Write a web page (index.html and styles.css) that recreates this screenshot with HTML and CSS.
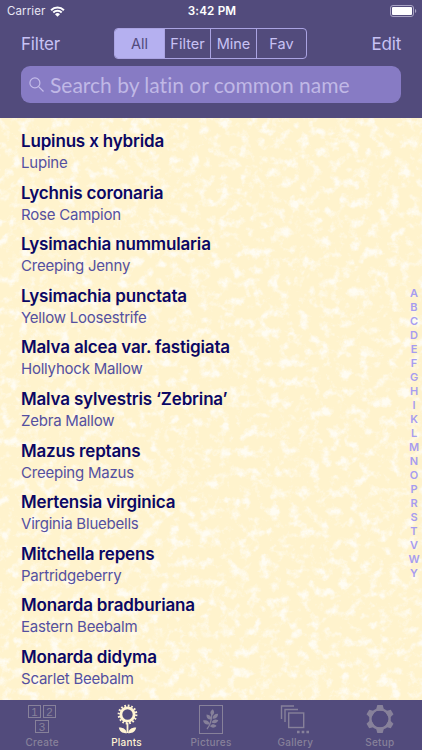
FILE: index.html
```html
<!DOCTYPE html>
<html lang="en">
<head>
  <meta charset="UTF-8">
  <meta name="viewport" content="width=device-width, initial-scale=1.0">
  <title>Plants</title>
  <link rel="stylesheet" href="styles.css">
</head>
<body>
  <header class="header">
    <div class="status-bar">
      <div class="carrier">
        <span>Carrier</span>
        <svg class="wifi" viewBox="0 0 16 12" width="15" height="11">
          <path d="M1 4.600a10 10 0 0 1 14 0M3.400 7a6.600 6.600 0 0 1 9.200 0" fill="none" stroke="#fff" stroke-width="2.200"/>
          <path d="M8 11.600L5.300 8.900a3.800 3.800 0 0 1 5.400 0z" fill="#fff"/>
        </svg>
      </div>
      <span class="time">3:42 PM</span>
      <svg class="battery" viewBox="0 0 27 12" width="27" height="12">
        <rect x=".5" y=".5" width="23" height="11" rx="2.500" fill="none" stroke="#a9a4c4"/>
        <rect x="2" y="2" width="20" height="8" rx="1" fill="#fff"/>
        <path d="M25 4a2.200 2.200 0 0 1 0 4z" fill="#a9a4c4"/>
      </svg>
    </div>
    <div class="nav-bar">
      <a class="nav-link nav-filter">Filter</a>
      <div class="segments">
        <span class="segment active">All</span>
        <span class="segment">Filter</span>
        <span class="segment">Mine</span>
        <span class="segment">Fav</span>
      </div>
      <a class="nav-link nav-edit">Edit</a>
    </div>
    <div class="search">
      <svg viewBox="0 0 15 15" width="15" height="15" fill="none" stroke="#c4bce9" stroke-width="1.200">
        <circle cx="5.900" cy="5.900" r="5"/>
        <path d="M9.600 9.600l4.900 4.900"/>
      </svg>
      <span class="placeholder">Search by latin or common name</span>
    </div>
  </header>

  <main class="content">
    <svg class="paper" width="422" height="582">
      <filter id="marble" x="0" y="0" width="100%" height="100%" color-interpolation-filters="sRGB">
        <feTurbulence type="fractalNoise" baseFrequency="0.1" numOctaves="5" seed="12"/>
        <feColorMatrix values="0 0 0 0 1  0 0 0 0 1  0 0 0 0 1  3 0 1.5 0 -2.2"/>
      </filter>
      <rect width="422" height="582" filter="url(#marble)"/>
    </svg>
    <ul class="plants">
      <li><b>Lupinus x hybrida</b><span>Lupine</span></li>
      <li><b>Lychnis coronaria</b><span>Rose Campion</span></li>
      <li><b>Lysimachia nummularia</b><span>Creeping Jenny</span></li>
      <li><b>Lysimachia punctata</b><span>Yellow Loosestrife</span></li>
      <li><b>Malva alcea var. fastigiata</b><span>Hollyhock Mallow</span></li>
      <li><b>Malva sylvestris ‘Zebrina’</b><span>Zebra Mallow</span></li>
      <li><b>Mazus reptans</b><span>Creeping Mazus</span></li>
      <li><b>Mertensia virginica</b><span>Virginia Bluebells</span></li>
      <li><b>Mitchella repens</b><span>Partridgeberry</span></li>
      <li><b>Monarda bradburiana</b><span>Eastern Beebalm</span></li>
      <li><b>Monarda didyma</b><span>Scarlet Beebalm</span></li>
    </ul>
    <div class="index">
      <span>A</span><span>B</span><span>C</span><span>D</span><span>E</span><span>F</span><span>G</span>
      <span>H</span><span>I</span><span>K</span><span>L</span><span>M</span><span>N</span><span>O</span>
      <span>P</span><span>R</span><span>S</span><span>T</span><span>V</span><span>W</span><span>Y</span>
    </div>
  </main>

  <nav class="tab-bar">
    <a class="tab">
      <svg viewBox="0 0 32 32" width="32" height="32" fill="none" stroke="currentColor" stroke-width="1">
        <rect x="2.500" y="2.500" width="12" height="12"/>
        <rect x="17.500" y="2.500" width="12" height="12"/>
        <rect x="9.500" y="17.500" width="13" height="12"/>
        <g class="digits">
          <text x="8.500" y="12.500">1</text>
          <text x="23.500" y="12.500">2</text>
          <text x="16" y="27.500">3</text>
        </g>
      </svg>
      <span>Create</span>
    </a>
    <a class="tab active">
      <svg viewBox="0 0 32 32" width="32" height="32" fill="none" stroke="currentColor">
        <circle cx="16.500" cy="11.500" r="8.800" stroke-width="2.200" stroke-dasharray="1.700 1.756"/>
        <circle cx="16.500" cy="11.500" r="6.600" stroke-width="2.800"/>
        <path d="M16.500 20v10" stroke-width="1.800"/>
        <path d="M16 30.200c-4.200.5-7.400-1.200-8.200-5.600 4.200-.3 7.400 1.900 8.200 5.600zM17 30.200c4.200.5 7.400-1.200 8.200-5.600-4.200-.3-7.400 1.900-8.200 5.600z" fill="currentColor" stroke="none"/>
      </svg>
      <span>Plants</span>
    </a>
    <a class="tab">
      <svg viewBox="0 0 32 32" width="32" height="32" fill="none" stroke="currentColor">
        <rect x="4.500" y="2.500" width="23" height="28"/>
        <path d="M12 26c3-3.500 4.500-8 4.800-15" stroke-width="1.300"/>
        <g fill="currentColor" stroke="none">
          <path d="M17 12.500c-2.400-2-2-4.500.8-6.300 2 2.300 1.800 4.700-.8 6.300z"/>
          <path d="M16.300 16.500c-3.500.2-5-1.500-4.800-5 3.300.2 4.900 1.800 4.800 5z"/>
          <path d="M14.800 21.200c-3.600 1.200-5.800-.2-6.800-3.700 3.600-.8 5.900.3 6.800 3.700z"/>
          <path d="M17.500 15.800c.2-3.300 2-5 5.600-5-.1 3.500-2.200 5.200-5.600 5z"/>
          <path d="M16.500 19.500c1.400-2.900 3.600-3.700 6.900-2.200-1.500 3-3.800 3.700-6.900 2.200z"/>
          <path d="M15 23.200c1.800-2.300 4-2.500 6.500-.3-2.200 2.200-4.300 2.300-6.500.3z"/>
        </g>
      </svg>
      <span>Pictures</span>
    </a>
    <a class="tab">
      <svg viewBox="0 0 32 32" width="32" height="32" fill="none" stroke="currentColor" stroke-width="1.400">
        <path d="M2.500 16V3H15M6 19V6.500h13"/>
        <rect x="9.700" y="10" width="15" height="14.500"/>
        <path d="M18 29h2.600M22.700 29h2.600M27.400 29H30" stroke-width="2.400"/>
      </svg>
      <span>Gallery</span>
    </a>
    <a class="tab">
      <svg viewBox="0 0 32 32" width="32" height="32" fill="none" stroke="currentColor">
        <circle cx="16" cy="16" r="9.600" stroke-width="2.400"/>
        <g fill="currentColor" stroke="none">
          <path id="tooth" d="M13.300 2h5.400l1.300 4.800-1.500 1h-5l-1.500-1z"/>
          <use href="#tooth" transform="rotate(60 16 16)"/>
          <use href="#tooth" transform="rotate(120 16 16)"/>
          <use href="#tooth" transform="rotate(180 16 16)"/>
          <use href="#tooth" transform="rotate(240 16 16)"/>
          <use href="#tooth" transform="rotate(300 16 16)"/>
        </g>
      </svg>
      <span>Setup</span>
    </a>
  </nav>
</body>
</html>
```
FILE: styles.css
```css
* {
  box-sizing: border-box;
}
body {
  margin: 0;
  width: 422px;
  height: 750px;
  display: flex;
  flex-direction: column;
  overflow: hidden;
  font-family: Inter, "Liberation Sans", sans-serif;
  background: #524b7c;
}
.header {
  height: 118px;
  color: #c8c2f4;
  background: #524b7c;
}
.status-bar {
  height: 22px;
  padding: 0 5px 0 7px;
  display: grid;
  grid-template-columns: 1fr auto 1fr;
  align-items: center;
  color: #fff;
  font-size: 12px;
}
.carrier {
  display: flex;
  align-items: center;
  gap: 5px;
  color: #e8e6f3;
  font-size: 11.5px;
  letter-spacing: 0.1px;
}
.time {
  font-size: 11.7px;
  font-weight: 600;
  letter-spacing: 0.15px;
}
.battery {
  justify-self: end;
}
.nav-bar {
  height: 43px;
  padding: 6px 21px 6px;
  display: grid;
  grid-template-columns: 93px 193px 1fr;
  align-items: center;
}
.nav-link {
  font-size: 17px;
  letter-spacing: -0.2px;
}
.nav-edit {
  text-align: right;
}
.segments {
  height: 31px;
  display: grid;
  grid-template-columns: 49px 46px 46px 1fr;
  border: 1px solid #aaa3e2;
  border-radius: 4px;
  overflow: hidden;
  font-size: 14.5px;
}
.segment {
  display: flex;
  align-items: center;
  justify-content: center;
  border-left: 1px solid #aaa3e2;
}
.segment:first-child {
  border-left: 0;
}
.segment.active {
  background: #b5b0f0;
  color: #524b7c;
}
.search {
  height: 37px;
  margin: 1px 21px 0;
  padding-left: 8px;
  display: flex;
  align-items: center;
  gap: 6px;
  border-radius: 9px;
  background: #877bc4;
}
.placeholder {
  font-family: Lato, "Liberation Sans", sans-serif;
  font-size: 21px;
  font-variant-ligatures: none;
  color: #c0b8e6;
  white-space: nowrap;
}
.content {
  position: relative;
  height: 582px;
  overflow: hidden;
  background: #fff3cd;
}
.paper {
  position: absolute;
  top: 0;
  left: 0;
  opacity: 0.75;
}
.plants {
  position: relative;
  margin: 0;
  padding: 11px 0 0 21px;
  list-style: none;
}
.plants li {
  height: 51.6px;
  display: flex;
  flex-direction: column;
}
.plants b {
  line-height: 25px;
  font-size: 17px;
  font-weight: 600;
  letter-spacing: -0.17px;
  color: #0b0764;
}
.plants span {
  line-height: 18px;
  font-size: 15px;
  letter-spacing: -0.22px;
  color: #5450a0;
}
.index {
  position: absolute;
  top: 168px;
  right: 0;
  width: 16px;
  display: flex;
  flex-direction: column;
  align-items: center;
  font-size: 11px;
  font-weight: 600;
  line-height: 13.98px;
  color: #a79df0;
}
.tab-bar {
  height: 50px;
  display: grid;
  grid-template-columns: repeat(5, 1fr);
  color: #87819a;
  background: #524b7c;
}
.tab {
  display: flex;
  flex-direction: column;
  align-items: center;
  padding-top: 3px;
  font-size: 10px;
  font-weight: 500;
  letter-spacing: 0.25px;
  line-height: 15px;
}
.tab.active {
  color: #fff4d3;
}
.digits {
  fill: currentColor;
  stroke: none;
  font-family: "Liberation Sans", sans-serif;
  font-size: 11.5px;
  text-anchor: middle;
}
```
